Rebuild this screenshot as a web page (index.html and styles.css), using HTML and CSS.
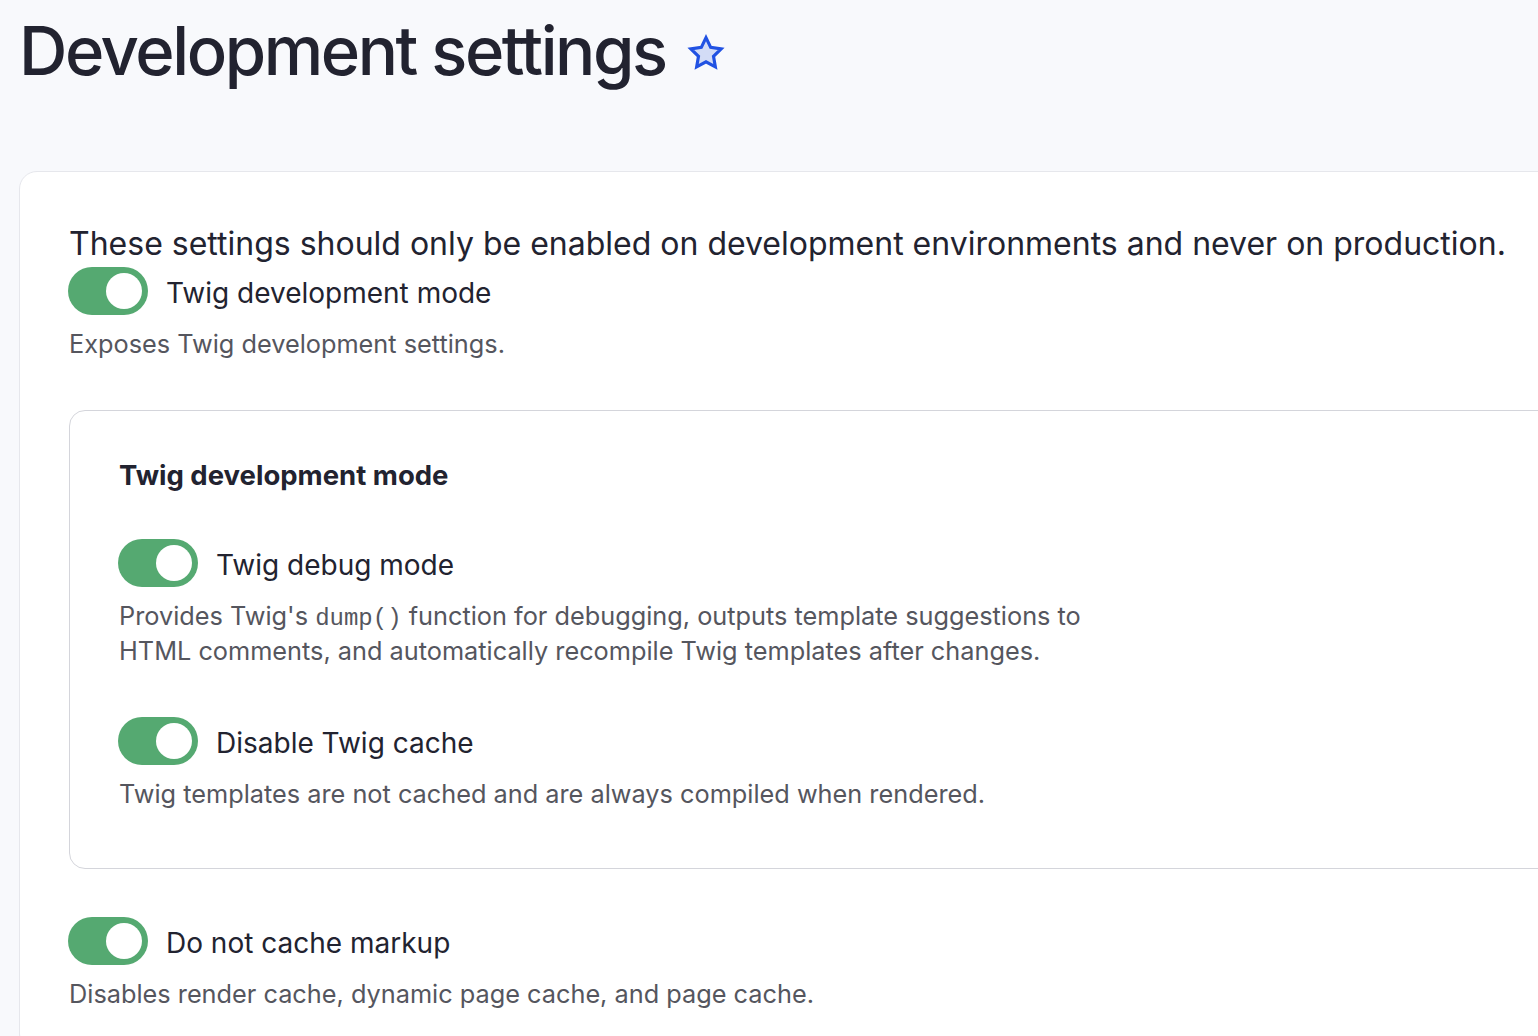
FILE: index.html
```html
<!DOCTYPE html>
<html lang="en">
<head>
<meta charset="utf-8">
<title>Development settings</title>
<link rel="stylesheet" href="styles.css">
</head>
<body>
<div class="page">
  <header class="page-header">
    <h1 class="page-title">Development settings</h1>
    <svg class="star" viewBox="0 0 24 24" aria-hidden="true">
      <path d="M12 2.8l2.8 5.8 6.3.9-4.6 4.5 1.1 6.3L12 17.3l-5.6 3 1.1-6.3-4.6-4.5 6.3-.9z"/>
    </svg>
  </header>

  <section class="card">
    <p class="intro">These settings should only be enabled on development environments and never on production.</p>

    <div class="form-item">
      <label class="toggle-row">
        <span class="toggle"><span class="knob"></span></span>
        <span class="toggle-label">Twig development mode</span>
      </label>
      <div class="description">Exposes Twig development settings.</div>
    </div>

    <div class="fieldset">
      <h2 class="fieldset-title">Twig development mode</h2>
      <div class="form-item">
        <label class="toggle-row">
          <span class="toggle"><span class="knob"></span></span>
          <span class="toggle-label">Twig debug mode</span>
        </label>
        <div class="description">Provides Twig's <code>dump()</code> function for debugging, outputs template suggestions to HTML comments, and automatically recompile Twig templates after changes.</div>
      </div>
      <div class="form-item">
        <label class="toggle-row">
          <span class="toggle"><span class="knob"></span></span>
          <span class="toggle-label">Disable Twig cache</span>
        </label>
        <div class="description">Twig templates are not cached and are always compiled when rendered.</div>
      </div>
    </div>

    <div class="form-item">
      <label class="toggle-row">
        <span class="toggle"><span class="knob"></span></span>
        <span class="toggle-label">Do not cache markup</span>
      </label>
      <div class="description">Disables render cache, dynamic page cache, and page cache.</div>
    </div>
  </section>
</div>
</body>
</html>
```

FILE: styles.css
```css
html, body {
  margin: 0;
  padding: 0;
  background: #f8f9fc;
  overflow: hidden;
}

body {
  font-family: Inter, "Noto Sans", sans-serif;
  color: #222330;
}

.page {
  width: 1700px;
  padding-left: 19px;
}

.page-header {
  display: flex;
  align-items: center;
  gap: 22px;
  padding-top: 10px;
  height: 82px;
}

.page-title {
  margin: 0;
  font-size: 67px;
  line-height: 82px;
  font-weight: 500;
  letter-spacing: -0.0365em;
}

.star {
  width: 40px;
  height: 40px;
  margin-top: 4px;
  margin-left: -2px;
}

.star path {
  fill: #d3dcf6;
  stroke: #2152e3;
  stroke-width: 1.9;
  stroke-linejoin: miter;
}

.card {
  margin-top: 79px;
  background: #fff;
  border: 1px solid #e6e7ec;
  border-radius: 18px;
  padding: 52px 48px 40px 49px;
}

.intro {
  margin: 0;
  font-size: 32px;
  line-height: 40px;
  white-space: nowrap;
}

.form-item {
  display: flex;
  flex-direction: column;
  align-items: flex-start;
}

.intro + .form-item {
  margin-top: 3px;
}

.toggle-row {
  display: flex;
  align-items: center;
  gap: 18px;
  margin-left: -1px;
}

.toggle {
  width: 80px;
  height: 48px;
  border-radius: 24px;
  background: #55a971;
  display: flex;
  align-items: center;
  justify-content: flex-end;
  padding-right: 6px;
  box-sizing: border-box;
}

.knob {
  width: 36px;
  height: 36px;
  border-radius: 50%;
  background: #fff;
}

.toggle-label {
  font-size: 28px;
  line-height: 40px;
  padding-top: 3px;
}

.description {
  margin-top: 11px;
  font-size: 25.3px;
  line-height: 35px;
  color: #55565e;
  max-width: 1000px;
}

.description code {
  font-family: "Liberation Mono", "DejaVu Sans Mono", monospace;
  font-size: 24px;
  line-height: 1;
}

.fieldset {
  margin-top: 49px;
  border: 1px solid #d4d5db;
  border-radius: 16px;
  padding: 46px 49px 57px 49px;
}

.fieldset-title {
  margin: 0;
  font-size: 27.5px;
  line-height: 36px;
  font-weight: 700;
}

.fieldset-title + .form-item {
  margin-top: 46px;
}

.form-item + .form-item {
  margin-top: 49px;
}

.fieldset + .form-item {
  margin-top: 48px;
}
```
